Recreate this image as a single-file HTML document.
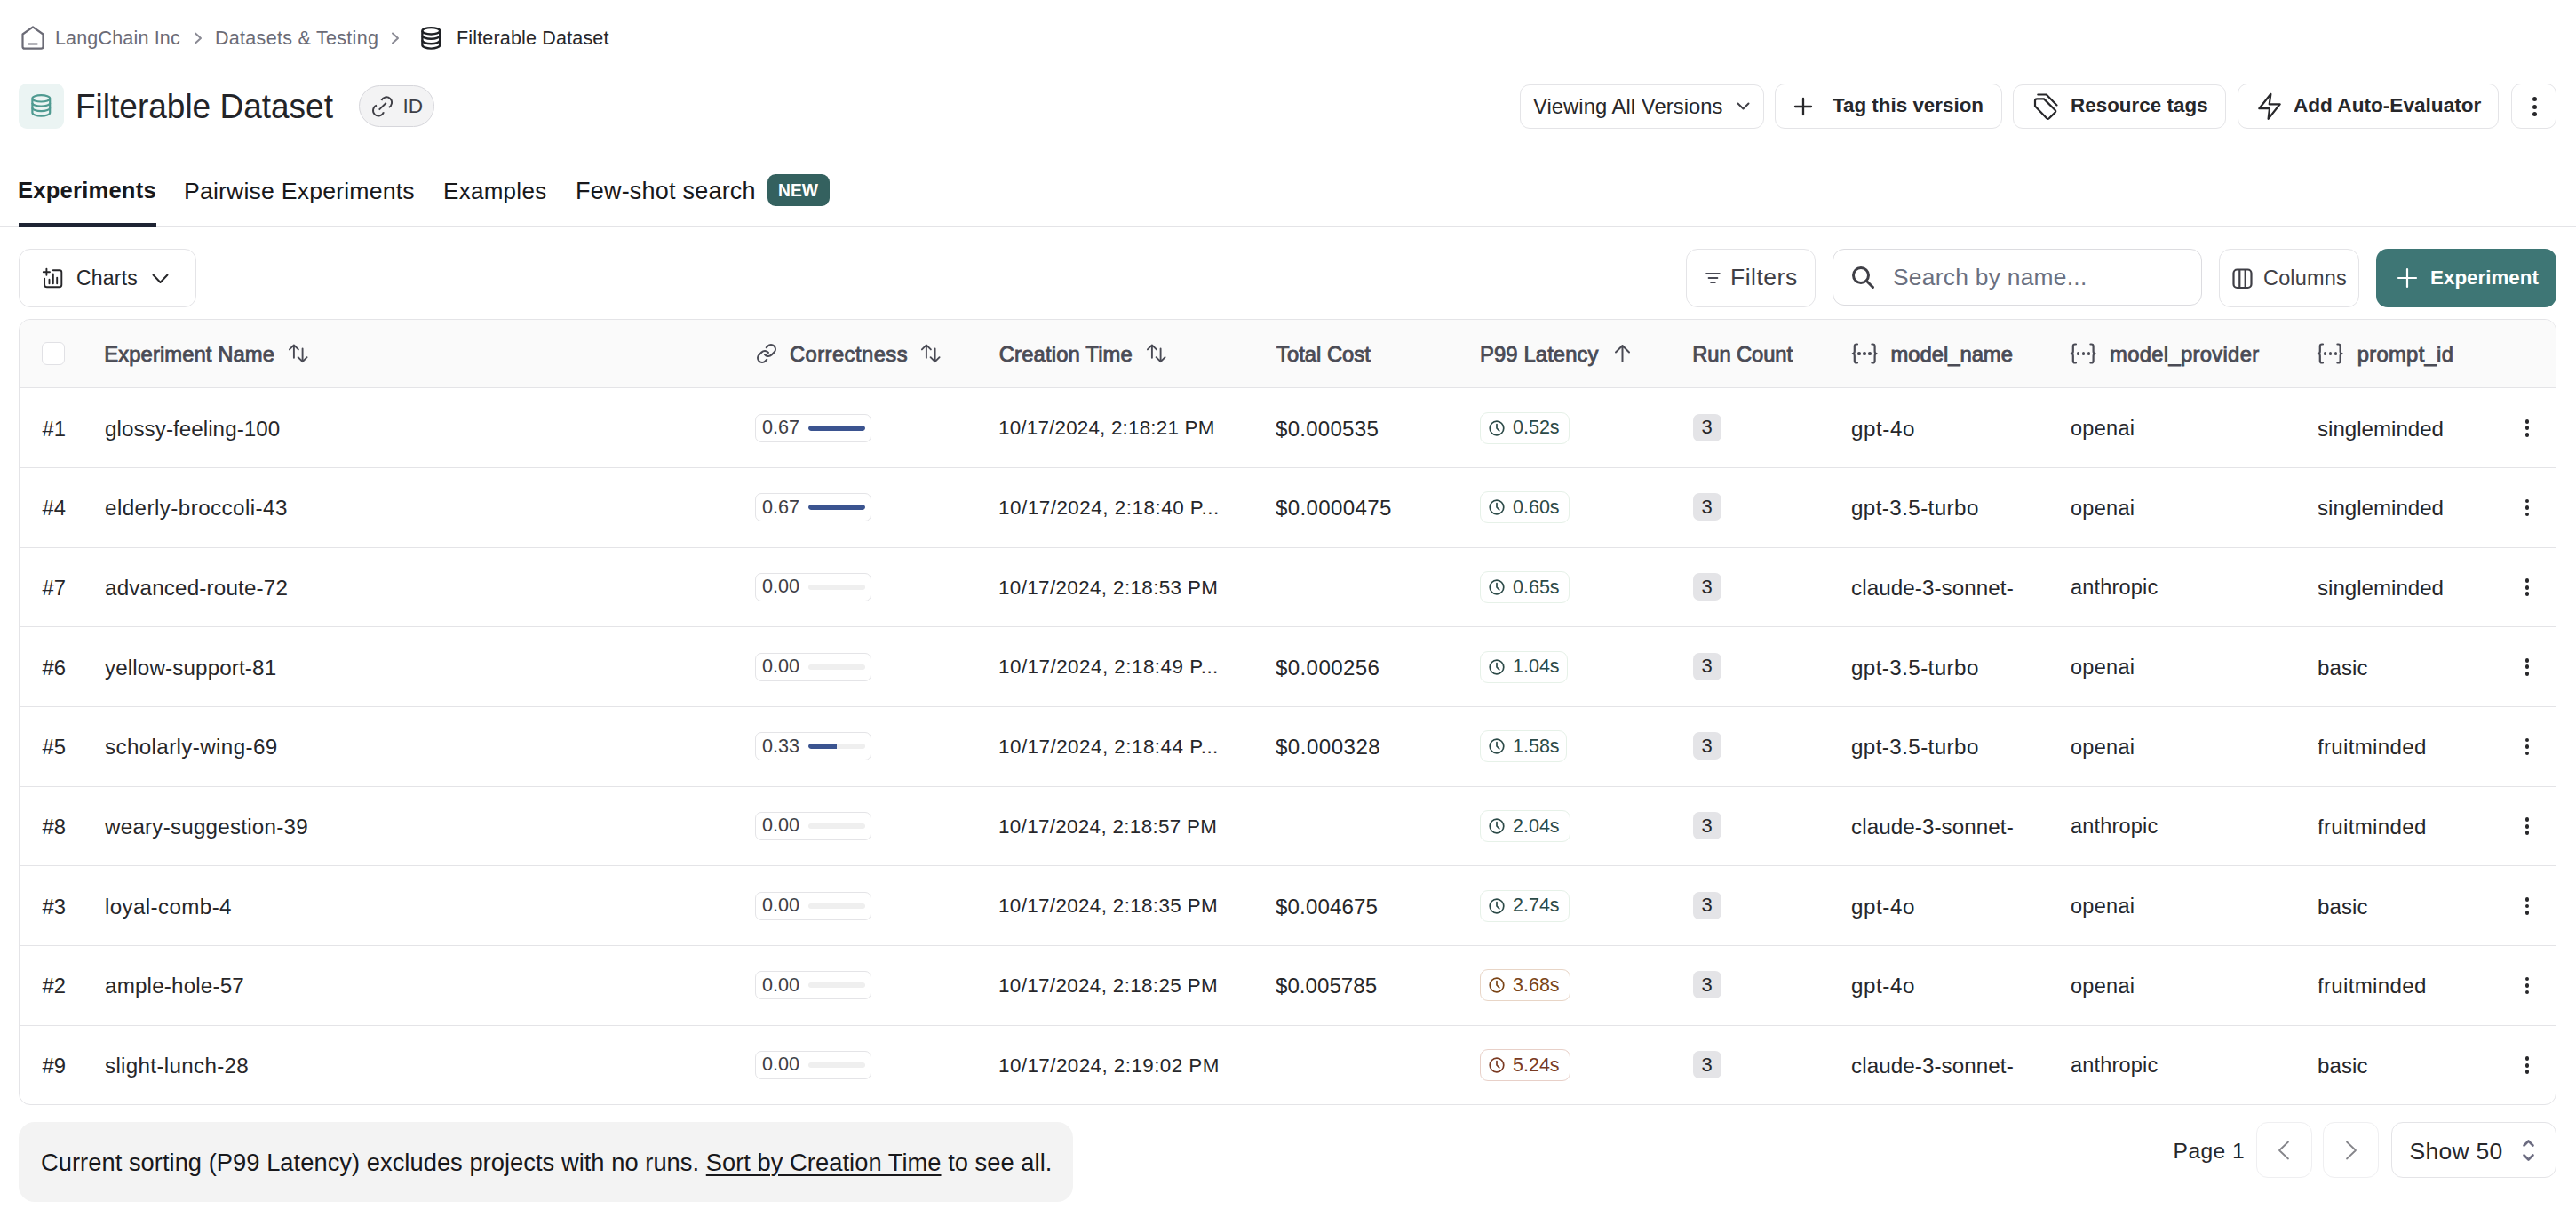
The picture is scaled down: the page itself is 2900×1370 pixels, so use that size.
<!DOCTYPE html>
<html><head><meta charset="utf-8">
<style>
*{box-sizing:border-box;margin:0;padding:0}
html,body{width:2900px;height:1370px;overflow:hidden;background:#fff}
body{position:relative;font-family:"Liberation Sans",sans-serif;color:#18181b}
.a{position:absolute}
.t{position:absolute;line-height:1;white-space:nowrap}
svg{position:absolute;overflow:visible}
.btn{position:absolute;border:1.5px solid #e4e4e7;border-radius:11px;background:#fff}
</style></head><body>

<!-- breadcrumb -->
<svg style="left:24px;top:29px" width="26" height="27" viewBox="0 0 26 27" fill="none" stroke="#6b6b76" stroke-width="2.2" stroke-linejoin="round" stroke-linecap="round">
  <path d="M1.5 9.5 L13 1.3 L24.5 9.5 V23.5 Q24.5 25.7 22.3 25.7 H3.7 Q1.5 25.7 1.5 23.5 Z"/>
  <path d="M8.3 20.5 H17.7"/>
</svg>
<div class="t" style="left:62.00px;top:32.90px;font-size:21.5px;color:#6b6b76;letter-spacing:0.167px">LangChain Inc</div>
<svg style="left:440px;top:36px" width="10" height="14" viewBox="0 0 10 14" fill="none" stroke="#8a8a94" stroke-width="2" stroke-linecap="round" stroke-linejoin="round"><path d="M2 1.5 L8 7 L2 12.5"/></svg>
<div class="t" style="left:242.00px;top:32.90px;font-size:21.5px;color:#6b6b76;letter-spacing:0.296px">Datasets &amp; Testing</div>
<svg style="left:218px;top:36px" width="10" height="14" viewBox="0 0 10 14" fill="none" stroke="#8a8a94" stroke-width="2" stroke-linecap="round" stroke-linejoin="round"><path d="M2 1.5 L8 7 L2 12.5"/></svg>
<svg style="left:474px;top:30px" width="23" height="26" viewBox="0 0 23 26" fill="none" stroke="#1f2125" stroke-width="2.4">
  <ellipse cx="11.3" cy="4.8" rx="9.9" ry="3.7"/>
  <path d="M1.4 4.8 V20.7 C1.4 22.9 5.8 24.6 11.3 24.6 C16.8 24.6 21.2 22.9 21.2 20.7 V4.8"/>
  <path d="M1.4 9.9 C1.4 12 5.8 13.7 11.3 13.7 C16.8 13.7 21.2 12 21.2 9.9"/>
  <path d="M1.4 15.3 C1.4 17.5 5.8 19.2 11.3 19.2 C16.8 19.2 21.2 17.5 21.2 15.3"/>
</svg>
<div class="t" style="left:514.00px;top:32.90px;font-size:21.5px;color:#27272a;letter-spacing:0.173px">Filterable Dataset</div>

<!-- title -->
<div class="a" style="left:21px;top:94px;width:51px;height:51px;border-radius:9px;background:#ebf4f3"></div>
<svg style="left:35px;top:106px" width="23" height="26" viewBox="0 0 23 26" fill="none" stroke="#4f9a91" stroke-width="2.2">
  <ellipse cx="11.3" cy="4.8" rx="9.9" ry="3.7"/>
  <path d="M1.4 4.8 V20.7 C1.4 22.9 5.8 24.6 11.3 24.6 C16.8 24.6 21.2 22.9 21.2 20.7 V4.8"/>
  <path d="M1.4 9.9 C1.4 12 5.8 13.7 11.3 13.7 C16.8 13.7 21.2 12 21.2 9.9"/>
  <path d="M1.4 15.3 C1.4 17.5 5.8 19.2 11.3 19.2 C16.8 19.2 21.2 17.5 21.2 15.3"/>
</svg>
<div class="t" style="left:85px;top:101.6px;font-size:37px;color:#232428;transform:scaleY(1.06);transform-origin:0 32px">Filterable Dataset</div>
<div class="a" style="left:404px;top:96px;width:85px;height:47px;border-radius:24px;background:#f3f3f4;border:1.5px solid #d6d6db"></div>
<svg style="left:418px;top:106px" width="24" height="24" viewBox="0 0 24 24" fill="none" stroke="#3f3f46" stroke-width="1.9" stroke-linecap="butt"><path d="M11.4 7 A6.1 6.1 0 1 1 19.7 14.9"/><path d="M6 12.7 A6.1 6.1 0 1 0 13.9 20.3"/><path d="M8.7 17.6 L16.8 9.7"/></svg>
<div class="t" style="left:453.5px;top:108.8px;font-size:22.6px;color:#3f3f46">ID</div>


<!-- top right buttons -->
<div class="btn" style="left:1711px;top:95px;width:275px;height:50px"></div>
<div class="t" style="left:1726.00px;top:108px;font-size:23.8px;color:#27272a;letter-spacing:0.049px">Viewing All Versions</div>
<svg style="left:1955px;top:115px" width="15" height="9" viewBox="0 0 15 9" fill="none" stroke="#3f3f46" stroke-width="2" stroke-linecap="round" stroke-linejoin="round"><path d="M1.5 1.5 L7.5 7.5 L13.5 1.5"/></svg>

<div class="btn" style="left:1998px;top:94px;width:256px;height:51px"></div>
<svg style="left:2020px;top:110px" width="20" height="20" viewBox="0 0 20 20" fill="none" stroke="#27272a" stroke-width="2.3" stroke-linecap="round"><path d="M10 1 V19 M1 10 H19"/></svg>
<div class="t" style="left:2063.00px;top:108px;font-size:22.4px;font-weight:700;color:#27272a;letter-spacing:0.000px">Tag this version</div>

<div class="btn" style="left:2266px;top:95px;width:240px;height:50px"></div>
<svg style="left:2286px;top:102px" width="34" height="36" viewBox="0 0 34 36" fill="none" stroke="#27272a" stroke-width="2.2" stroke-linejoin="round" stroke-linecap="round">
  <path d="M5 17.5 V11.6 Q5 9.4 7.2 9.4 H15 L27.6 22 Q28.8 23.3 27.6 24.6 L20.8 31.3 Q19.5 32.5 18.2 31.3 Z"/>
  <path d="M8.3 4.5 H17.8 L29.5 16.4"/>
</svg>
<div class="t" style="left:2331.00px;top:108px;font-size:22.3px;font-weight:700;color:#27272a;letter-spacing:0.085px">Resource tags</div>

<div class="btn" style="left:2519px;top:94px;width:294px;height:51px"></div>
<svg style="left:2538px;top:102px" width="34" height="36" viewBox="0 0 34 36" fill="none" stroke="#27272a" stroke-width="2.2" stroke-linejoin="round" stroke-linecap="round"><path d="M18.4 3.8 L5.3 20.2 H17 L15.6 31.9 L28.7 15.3 H16.7 Z"/></svg>
<div class="t" style="left:2582.00px;top:108px;font-size:22.6px;font-weight:700;color:#27272a;letter-spacing:0.002px">Add Auto-Evaluator</div>

<div class="btn" style="left:2827px;top:94px;width:51px;height:51px"></div>
<div class="a" style="left:2850.5px;top:109px;width:5px;height:5px;border-radius:50%;background:#27272a"></div>
<div class="a" style="left:2850.5px;top:117.5px;width:5px;height:5px;border-radius:50%;background:#27272a"></div>
<div class="a" style="left:2850.5px;top:126px;width:5px;height:5px;border-radius:50%;background:#27272a"></div>

<!-- tabs -->
<div class="t" style="left:20.00px;top:202.00px;font-size:25.6px;font-weight:700;color:#18181b;letter-spacing:0.200px">Experiments</div>
<div class="t" style="left:207.00px;top:201.60px;font-size:26.7px;color:#18181b;letter-spacing:0.158px">Pairwise Experiments</div>
<div class="t" style="left:499.00px;top:201.60px;font-size:26px;color:#18181b;letter-spacing:0.286px">Examples</div>
<div class="t" style="left:648.00px;top:201.60px;font-size:27px;color:#18181b;letter-spacing:0.215px">Few-shot search</div>
<div class="a" style="left:864px;top:196px;width:70px;height:36px;border-radius:9px;background:#34615f"></div>
<div class="t" style="left:876px;top:204.5px;font-size:19.3px;font-weight:700;color:#fff">NEW</div>
<div class="a" style="left:0;top:254px;width:2900px;height:1px;background:#e4e4e7"></div>
<div class="a" style="left:21px;top:251px;width:155px;height:3.5px;background:#1e2433"></div>

<!-- toolbar -->
<div class="btn" style="left:21px;top:280px;width:200px;height:66px;border-radius:13px"></div>
<svg style="left:40px;top:295px" width="40" height="35" viewBox="0 0 40 35" fill="none" stroke="#27272a" stroke-width="1.9" stroke-linecap="round" stroke-linejoin="round">
  <path d="M12.4 7.6 V14.8 M8.8 11.2 H16"/>
  <path d="M19.8 9.2 H27 Q29.3 9.2 29.3 11.5 V25.8 Q29.3 28.3 26.8 28.3 H13 Q10.1 28.3 10.1 25.4 V18.6"/>
  <path d="M15.5 19.8 V24.2 M19.8 13.4 V24.2 M24.2 17.6 V24.2"/>
</svg>
<div class="t" style="left:86.00px;top:301.5px;font-size:23px;color:#27272a;letter-spacing:0.200px">Charts</div>
<svg style="left:171px;top:308px" width="19" height="12" viewBox="0 0 19 12" fill="none" stroke="#27272a" stroke-width="2" stroke-linecap="round" stroke-linejoin="round"><path d="M1.5 1.5 L9.5 10 L17.5 1.5"/></svg>

<div class="btn" style="left:1898px;top:280px;width:146px;height:66px;border-radius:13px"></div>
<svg style="left:1910px;top:295px" width="40" height="35" viewBox="0 0 40 35" fill="none" stroke="#4a4b55" stroke-width="1.9" stroke-linecap="round"><path d="M11.1 12.9 H25.8 M13.6 18 H23.4 M16.1 23.1 H20.8"/></svg>
<div class="t" style="left:1948.00px;top:299px;font-size:26.5px;color:#3f3f46;letter-spacing:0.501px">Filters</div>

<div class="btn" style="left:2063px;top:280px;width:416px;height:64px;border-radius:13px;border-color:#dcdce0"></div>
<svg style="left:2084px;top:299px" width="27" height="27" viewBox="0 0 27 27" fill="none" stroke="#3f3f46" stroke-width="3" stroke-linecap="round"><circle cx="11" cy="11" r="8.5"/><path d="M17.5 17.5 L24.5 24.5"/></svg>
<div class="t" style="left:2131.00px;top:299px;font-size:26.4px;color:#6b7080;letter-spacing:0.254px">Search by name...</div>

<div class="btn" style="left:2498px;top:280px;width:158px;height:66px;border-radius:13px"></div>
<svg style="left:2513px;top:302px" width="24" height="24" viewBox="0 0 24 24" fill="none" stroke="#3f3f46" stroke-width="2.2" stroke-linejoin="round"><rect x="1.5" y="1.5" width="20" height="20.5" rx="4"/><path d="M8.3 1.5 V22 M14.7 1.5 V22"/></svg>
<div class="t" style="left:2548.00px;top:301.5px;font-size:23.5px;color:#3f3f46;letter-spacing:0.167px">Columns</div>

<div class="a" style="left:2675px;top:280px;width:203px;height:66px;border-radius:13px;background:#3e7675"></div>
<svg style="left:2699px;top:302px" width="22" height="22" viewBox="0 0 22 22" fill="none" stroke="#fff" stroke-width="2.2" stroke-linecap="round"><path d="M11 1 V21 M1 11 H21"/></svg>
<div class="t" style="left:2736px;top:301.8px;font-size:22.4px;font-weight:700;color:#fff">Experiment</div>

<!-- TABLE START -->
<div class="a" style="left:21px;top:359px;width:2857px;height:885px;border:1px solid #e4e4e7;border-radius:13px;overflow:hidden;background:#fff">
<div class="a" style="left:0;top:0;width:2857px;height:77px;background:#fafafa;border-bottom:1px solid #e4e4e7"></div>
<div class="a" style="left:0;top:165.97px;width:2857px;height:1px;background:#e4e4e7"></div>
<div class="a" style="left:0;top:255.64px;width:2857px;height:1px;background:#e4e4e7"></div>
<div class="a" style="left:0;top:345.31px;width:2857px;height:1px;background:#e4e4e7"></div>
<div class="a" style="left:0;top:434.98px;width:2857px;height:1px;background:#e4e4e7"></div>
<div class="a" style="left:0;top:524.65px;width:2857px;height:1px;background:#e4e4e7"></div>
<div class="a" style="left:0;top:614.32px;width:2857px;height:1px;background:#e4e4e7"></div>
<div class="a" style="left:0;top:703.99px;width:2857px;height:1px;background:#e4e4e7"></div>
<div class="a" style="left:0;top:793.66px;width:2857px;height:1px;background:#e4e4e7"></div>
</div>
<div class="a" style="left:47px;top:385px;width:26px;height:26px;border:1px solid #e1e1e5;border-radius:6px;background:#fff"></div>
<div class="t" style="left:117.3px;top:386.5px;font-size:23.8px;color:#4a4b55;-webkit-text-stroke:0.85px #4a4b55;letter-spacing:0.086px">Experiment Name</div>
<svg style="left:325px;top:387px" width="22" height="21" viewBox="0 0 22 21" fill="none" stroke="#4a4b55" stroke-width="1.9" stroke-linecap="round" stroke-linejoin="round"><path d="M5.9 15.7 V1.6 M0.9 6.4 L5.9 1.4 L10.9 6.4 M15.6 5.4 V19.9 M10.6 15.2 L15.6 20.2 L20.6 15.2"/></svg>
<svg style="left:851px;top:386px" width="24" height="24" viewBox="0 0 24 24" fill="none" stroke="#4a4b55" stroke-width="2.1" stroke-linecap="round" stroke-linejoin="round"><path d="M10 13a5 5 0 0 0 7.54.54l3-3a5 5 0 0 0-7.07-7.07l-1.72 1.71"/><path d="M14 11a5 5 0 0 0-7.54-.54l-3 3a5 5 0 0 0 7.07 7.07l1.71-1.71"/></svg>
<div class="t" style="left:888.9px;top:386.5px;font-size:23.8px;color:#4a4b55;-webkit-text-stroke:0.85px #4a4b55;letter-spacing:0.440px">Correctness</div>
<svg style="left:1037px;top:387px" width="22" height="21" viewBox="0 0 22 21" fill="none" stroke="#4a4b55" stroke-width="1.9" stroke-linecap="round" stroke-linejoin="round"><path d="M5.9 15.7 V1.6 M0.9 6.4 L5.9 1.4 L10.9 6.4 M15.6 5.4 V19.9 M10.6 15.2 L15.6 20.2 L20.6 15.2"/></svg>
<div class="t" style="left:1124.7px;top:386.5px;font-size:23.8px;color:#4a4b55;-webkit-text-stroke:0.85px #4a4b55;letter-spacing:0.167px">Creation Time</div>
<svg style="left:1291px;top:387px" width="22" height="21" viewBox="0 0 22 21" fill="none" stroke="#4a4b55" stroke-width="1.9" stroke-linecap="round" stroke-linejoin="round"><path d="M5.9 15.7 V1.6 M0.9 6.4 L5.9 1.4 L10.9 6.4 M15.6 5.4 V19.9 M10.6 15.2 L15.6 20.2 L20.6 15.2"/></svg>
<div class="t" style="left:1437.0px;top:386.5px;font-size:23.8px;color:#4a4b55;-webkit-text-stroke:0.85px #4a4b55">Total Cost</div>
<div class="t" style="left:1666.0px;top:386.5px;font-size:23.8px;color:#4a4b55;-webkit-text-stroke:0.85px #4a4b55;letter-spacing:0.120px">P99 Latency</div>
<svg style="left:1817px;top:387px" width="19" height="21" viewBox="0 0 19 21" fill="none" stroke="#4a4b55" stroke-width="2" stroke-linecap="round" stroke-linejoin="round"><path d="M9.5 20 V2 M2 9.5 L9.5 2 L17 9.5"/></svg>
<div class="t" style="left:1905.3px;top:386.5px;font-size:23.8px;color:#4a4b55;-webkit-text-stroke:0.85px #4a4b55;letter-spacing:-0.125px">Run Count</div>
<svg style="left:2084.5px;top:386px" width="29" height="24" viewBox="0 0 29 24" fill="none" stroke="#4a4b55" stroke-width="2.2" stroke-linecap="round" stroke-linejoin="round"><path d="M6 1.5 H5 Q2.8 1.5 2.8 3.8 V9.2 Q2.8 12 0.8 12 Q2.8 12 2.8 14.8 V20.2 Q2.8 22.5 5 22.5 H6"/><path d="M22.4 1.5 H23.4 Q25.6 1.5 25.6 3.8 V9.2 Q25.6 12 27.6 12 Q25.6 12 25.6 14.8 V20.2 Q25.6 22.5 23.4 22.5 H22.4"/></svg><div class="a" style="left:2092.7px;top:410px;width:0"></div><div class="a" style="left:2091.1px;top:395.9px;width:3.7px;height:3.7px;border-radius:50%;background:#4a4b55"></div><div class="a" style="left:2097.1px;top:395.9px;width:3.7px;height:3.7px;border-radius:50%;background:#4a4b55"></div><div class="a" style="left:2103.1px;top:395.9px;width:3.7px;height:3.7px;border-radius:50%;background:#4a4b55"></div>
<div class="t" style="left:2128.5px;top:386.5px;font-size:23.8px;color:#4a4b55;-webkit-text-stroke:0.85px #4a4b55;letter-spacing:-0.022px">model_name</div>
<svg style="left:2331px;top:386px" width="29" height="24" viewBox="0 0 29 24" fill="none" stroke="#4a4b55" stroke-width="2.2" stroke-linecap="round" stroke-linejoin="round"><path d="M6 1.5 H5 Q2.8 1.5 2.8 3.8 V9.2 Q2.8 12 0.8 12 Q2.8 12 2.8 14.8 V20.2 Q2.8 22.5 5 22.5 H6"/><path d="M22.4 1.5 H23.4 Q25.6 1.5 25.6 3.8 V9.2 Q25.6 12 27.6 12 Q25.6 12 25.6 14.8 V20.2 Q25.6 22.5 23.4 22.5 H22.4"/></svg><div class="a" style="left:2339.2px;top:410px;width:0"></div><div class="a" style="left:2337.6px;top:395.9px;width:3.7px;height:3.7px;border-radius:50%;background:#4a4b55"></div><div class="a" style="left:2343.6px;top:395.9px;width:3.7px;height:3.7px;border-radius:50%;background:#4a4b55"></div><div class="a" style="left:2349.6px;top:395.9px;width:3.7px;height:3.7px;border-radius:50%;background:#4a4b55"></div>
<div class="t" style="left:2375.1px;top:386.5px;font-size:23.8px;color:#4a4b55;-webkit-text-stroke:0.85px #4a4b55;letter-spacing:0.308px">model_provider</div>
<svg style="left:2609px;top:386px" width="29" height="24" viewBox="0 0 29 24" fill="none" stroke="#4a4b55" stroke-width="2.2" stroke-linecap="round" stroke-linejoin="round"><path d="M6 1.5 H5 Q2.8 1.5 2.8 3.8 V9.2 Q2.8 12 0.8 12 Q2.8 12 2.8 14.8 V20.2 Q2.8 22.5 5 22.5 H6"/><path d="M22.4 1.5 H23.4 Q25.6 1.5 25.6 3.8 V9.2 Q25.6 12 27.6 12 Q25.6 12 25.6 14.8 V20.2 Q25.6 22.5 23.4 22.5 H22.4"/></svg><div class="a" style="left:2617.2px;top:410px;width:0"></div><div class="a" style="left:2615.6px;top:395.9px;width:3.7px;height:3.7px;border-radius:50%;background:#4a4b55"></div><div class="a" style="left:2621.6px;top:395.9px;width:3.7px;height:3.7px;border-radius:50%;background:#4a4b55"></div><div class="a" style="left:2627.6px;top:395.9px;width:3.7px;height:3.7px;border-radius:50%;background:#4a4b55"></div>
<div class="t" style="left:2653.7px;top:386.5px;font-size:23.8px;color:#4a4b55;-webkit-text-stroke:0.85px #4a4b55;letter-spacing:0.300px">prompt_id</div>
<div class="t" style="left:47.5px;top:470.7px;font-size:23.8px;color:#27272a">#1</div>
<div class="t" style="left:118.0px;top:470.5px;font-size:24.2px;color:#27272a;letter-spacing:0.053px">glossy-feeling-100</div>
<div class="a" style="left:850px;top:465.5px;width:131px;height:32px;border:1px solid #e4e4e7;border-radius:7px"></div>
<div class="t" style="left:858.0px;top:470.1px;font-size:21.6px;color:#3f3f46">0.67</div>
<div class="a" style="left:910px;top:478.5px;width:64px;height:6px;border-radius:3px;background:#efefef;overflow:hidden"><div style="width:100%;height:100%;background:#3b5490;border-radius:3px 0 0 3px;border-radius:3px"></div></div>
<div class="t" style="left:1124.0px;top:471.4px;font-size:22.4px;color:#27272a;letter-spacing:0.205px">10/17/2024, 2:18:21 PM</div>
<div class="t" style="left:1436.0px;top:470.6px;font-size:24.1px;color:#27272a;letter-spacing:0.237px">$0.000535</div>
<div class="a" style="left:1666px;top:463.5px;height:36px;border:1px solid #e6f1e8;border-radius:9px;background:#fff;width:100.5px;padding:0 0 0 9px;display:flex;align-items:center;white-space:nowrap"><svg style="position:static;display:block;margin-right:9px" width="18" height="18" viewBox="0 0 18 18" fill="none" stroke="#2c4a48" stroke-width="1.7" stroke-linecap="round"><circle cx="9" cy="9" r="7.8"/><path d="M9 4.5 V9 L11.8 11.8"/></svg><span style="font-size:21.5px;line-height:1;color:#2c4a48;position:relative;top:0.6px">0.52s</span></div>
<div class="a" style="left:1906px;top:465.6px;width:32px;height:31px;border-radius:7px;background:#e4e4e7"></div>
<div class="t" style="left:1915.5px;top:470.4px;font-size:22px;color:#27272a">3</div>
<div class="t" style="left:2084.0px;top:470.5px;font-size:24.2px;color:#27272a;letter-spacing:0.560px">gpt-4o</div>
<div class="t" style="left:2331.0px;top:470.9px;font-size:23.5px;color:#27272a;letter-spacing:0.280px">openai</div>
<div class="t" style="left:2609.0px;top:470.6px;font-size:24.1px;color:#27272a">singleminded</div>
<div class="a" style="left:2842.7px;top:471.9px;width:4.8px;height:4.8px;border-radius:50%;background:#27272a"></div>
<div class="a" style="left:2842.7px;top:479.4px;width:4.8px;height:4.8px;border-radius:50%;background:#27272a"></div>
<div class="a" style="left:2842.7px;top:486.9px;width:4.8px;height:4.8px;border-radius:50%;background:#27272a"></div>
<div class="t" style="left:47.5px;top:560.4px;font-size:23.8px;color:#27272a">#4</div>
<div class="t" style="left:118.0px;top:560.2px;font-size:24.2px;color:#27272a;letter-spacing:0.433px">elderly-broccoli-43</div>
<div class="a" style="left:850px;top:555.2px;width:131px;height:32px;border:1px solid #e4e4e7;border-radius:7px"></div>
<div class="t" style="left:858.0px;top:559.8px;font-size:21.6px;color:#3f3f46">0.67</div>
<div class="a" style="left:910px;top:568.2px;width:64px;height:6px;border-radius:3px;background:#efefef;overflow:hidden"><div style="width:100%;height:100%;background:#3b5490;border-radius:3px 0 0 3px;border-radius:3px"></div></div>
<div class="t" style="left:1124.0px;top:561.1px;font-size:22.4px;color:#27272a;letter-spacing:0.522px">10/17/2024, 2:18:40 P...</div>
<div class="t" style="left:1436.0px;top:560.2px;font-size:24.1px;color:#27272a;letter-spacing:0.333px">$0.0000475</div>
<div class="a" style="left:1666px;top:553.2px;height:36px;border:1px solid #e6f1e8;border-radius:9px;background:#fff;width:101px;padding:0 0 0 9px;display:flex;align-items:center;white-space:nowrap"><svg style="position:static;display:block;margin-right:9px" width="18" height="18" viewBox="0 0 18 18" fill="none" stroke="#2c4a48" stroke-width="1.7" stroke-linecap="round"><circle cx="9" cy="9" r="7.8"/><path d="M9 4.5 V9 L11.8 11.8"/></svg><span style="font-size:21.5px;line-height:1;color:#2c4a48;position:relative;top:0.6px">0.60s</span></div>
<div class="a" style="left:1906px;top:555.3px;width:32px;height:31px;border-radius:7px;background:#e4e4e7"></div>
<div class="t" style="left:1915.5px;top:560.1px;font-size:22px;color:#27272a">3</div>
<div class="t" style="left:2084.0px;top:560.2px;font-size:24.2px;color:#27272a;letter-spacing:0.408px">gpt-3.5-turbo</div>
<div class="t" style="left:2331.0px;top:560.5px;font-size:23.5px;color:#27272a;letter-spacing:0.280px">openai</div>
<div class="t" style="left:2609.0px;top:560.2px;font-size:24.1px;color:#27272a">singleminded</div>
<div class="a" style="left:2842.7px;top:561.6px;width:4.8px;height:4.8px;border-radius:50%;background:#27272a"></div>
<div class="a" style="left:2842.7px;top:569.1px;width:4.8px;height:4.8px;border-radius:50%;background:#27272a"></div>
<div class="a" style="left:2842.7px;top:576.6px;width:4.8px;height:4.8px;border-radius:50%;background:#27272a"></div>
<div class="t" style="left:47.5px;top:650.0px;font-size:23.8px;color:#27272a">#7</div>
<div class="t" style="left:118.0px;top:649.9px;font-size:24.2px;color:#27272a;letter-spacing:0.175px">advanced-route-72</div>
<div class="a" style="left:850px;top:644.9px;width:131px;height:32px;border:1px solid #e4e4e7;border-radius:7px"></div>
<div class="t" style="left:858.0px;top:649.4px;font-size:21.6px;color:#3f3f46">0.00</div>
<div class="a" style="left:910px;top:657.9px;width:64px;height:6px;border-radius:3px;background:#efefef;overflow:hidden"><div style="width:0%;height:100%;background:#3b5490;border-radius:3px 0 0 3px"></div></div>
<div class="t" style="left:1124.0px;top:650.7px;font-size:22.4px;color:#27272a;letter-spacing:0.381px">10/17/2024, 2:18:53 PM</div>
<div class="a" style="left:1666px;top:642.9px;height:36px;border:1px solid #e6f1e8;border-radius:9px;background:#fff;width:100.5px;padding:0 0 0 9px;display:flex;align-items:center;white-space:nowrap"><svg style="position:static;display:block;margin-right:9px" width="18" height="18" viewBox="0 0 18 18" fill="none" stroke="#2c4a48" stroke-width="1.7" stroke-linecap="round"><circle cx="9" cy="9" r="7.8"/><path d="M9 4.5 V9 L11.8 11.8"/></svg><span style="font-size:21.5px;line-height:1;color:#2c4a48;position:relative;top:0.6px">0.65s</span></div>
<div class="a" style="left:1906px;top:645.0px;width:32px;height:31px;border-radius:7px;background:#e4e4e7"></div>
<div class="t" style="left:1915.5px;top:649.7px;font-size:22px;color:#27272a">3</div>
<div class="t" style="left:2084.0px;top:649.9px;font-size:24.2px;color:#27272a;letter-spacing:0.080px">claude-3-sonnet-</div>
<div class="t" style="left:2331.0px;top:650.2px;font-size:23.5px;color:#27272a;letter-spacing:0.188px">anthropic</div>
<div class="t" style="left:2609.0px;top:649.9px;font-size:24.1px;color:#27272a">singleminded</div>
<div class="a" style="left:2842.7px;top:651.3px;width:4.8px;height:4.8px;border-radius:50%;background:#27272a"></div>
<div class="a" style="left:2842.7px;top:658.8px;width:4.8px;height:4.8px;border-radius:50%;background:#27272a"></div>
<div class="a" style="left:2842.7px;top:666.3px;width:4.8px;height:4.8px;border-radius:50%;background:#27272a"></div>
<div class="t" style="left:47.5px;top:739.7px;font-size:23.8px;color:#27272a">#6</div>
<div class="t" style="left:118.0px;top:739.5px;font-size:24.2px;color:#27272a;letter-spacing:0.137px">yellow-support-81</div>
<div class="a" style="left:850px;top:734.5px;width:131px;height:32px;border:1px solid #e4e4e7;border-radius:7px"></div>
<div class="t" style="left:858.0px;top:739.1px;font-size:21.6px;color:#3f3f46">0.00</div>
<div class="a" style="left:910px;top:747.5px;width:64px;height:6px;border-radius:3px;background:#efefef;overflow:hidden"><div style="width:0%;height:100%;background:#3b5490;border-radius:3px 0 0 3px"></div></div>
<div class="t" style="left:1124.0px;top:740.4px;font-size:22.4px;color:#27272a;letter-spacing:0.487px">10/17/2024, 2:18:49 P...</div>
<div class="t" style="left:1436.0px;top:739.6px;font-size:24.1px;color:#27272a;letter-spacing:0.375px">$0.000256</div>
<div class="a" style="left:1666px;top:732.5px;height:36px;border:1px solid #e6f1e8;border-radius:9px;background:#fff;width:98.5px;padding:0 0 0 9px;display:flex;align-items:center;white-space:nowrap"><svg style="position:static;display:block;margin-right:9px" width="18" height="18" viewBox="0 0 18 18" fill="none" stroke="#2c4a48" stroke-width="1.7" stroke-linecap="round"><circle cx="9" cy="9" r="7.8"/><path d="M9 4.5 V9 L11.8 11.8"/></svg><span style="font-size:21.5px;line-height:1;color:#2c4a48;position:relative;top:0.6px">1.04s</span></div>
<div class="a" style="left:1906px;top:734.6px;width:32px;height:31px;border-radius:7px;background:#e4e4e7"></div>
<div class="t" style="left:1915.5px;top:739.4px;font-size:22px;color:#27272a">3</div>
<div class="t" style="left:2084.0px;top:739.5px;font-size:24.2px;color:#27272a;letter-spacing:0.408px">gpt-3.5-turbo</div>
<div class="t" style="left:2331.0px;top:739.9px;font-size:23.5px;color:#27272a;letter-spacing:0.280px">openai</div>
<div class="t" style="left:2609.0px;top:739.6px;font-size:24.1px;color:#27272a;letter-spacing:0.050px">basic</div>
<div class="a" style="left:2842.7px;top:740.9px;width:4.8px;height:4.8px;border-radius:50%;background:#27272a"></div>
<div class="a" style="left:2842.7px;top:748.4px;width:4.8px;height:4.8px;border-radius:50%;background:#27272a"></div>
<div class="a" style="left:2842.7px;top:755.9px;width:4.8px;height:4.8px;border-radius:50%;background:#27272a"></div>
<div class="t" style="left:47.5px;top:829.4px;font-size:23.8px;color:#27272a">#5</div>
<div class="t" style="left:118.0px;top:829.2px;font-size:24.2px;color:#27272a;letter-spacing:0.375px">scholarly-wing-69</div>
<div class="a" style="left:850px;top:824.2px;width:131px;height:32px;border:1px solid #e4e4e7;border-radius:7px"></div>
<div class="t" style="left:858.0px;top:828.8px;font-size:21.6px;color:#3f3f46">0.33</div>
<div class="a" style="left:910px;top:837.2px;width:64px;height:6px;border-radius:3px;background:#efefef;overflow:hidden"><div style="width:50%;height:100%;background:#3b5490;border-radius:3px 0 0 3px"></div></div>
<div class="t" style="left:1124.0px;top:830.1px;font-size:22.4px;color:#27272a;letter-spacing:0.487px">10/17/2024, 2:18:44 P...</div>
<div class="t" style="left:1436.0px;top:829.2px;font-size:24.1px;color:#27272a;letter-spacing:0.475px">$0.000328</div>
<div class="a" style="left:1666px;top:822.2px;height:36px;border:1px solid #e6f1e8;border-radius:9px;background:#fff;width:97.5px;padding:0 0 0 9px;display:flex;align-items:center;white-space:nowrap"><svg style="position:static;display:block;margin-right:9px" width="18" height="18" viewBox="0 0 18 18" fill="none" stroke="#2c4a48" stroke-width="1.7" stroke-linecap="round"><circle cx="9" cy="9" r="7.8"/><path d="M9 4.5 V9 L11.8 11.8"/></svg><span style="font-size:21.5px;line-height:1;color:#2c4a48;position:relative;top:0.6px">1.58s</span></div>
<div class="a" style="left:1906px;top:824.3px;width:32px;height:31px;border-radius:7px;background:#e4e4e7"></div>
<div class="t" style="left:1915.5px;top:829.1px;font-size:22px;color:#27272a">3</div>
<div class="t" style="left:2084.0px;top:829.2px;font-size:24.2px;color:#27272a;letter-spacing:0.408px">gpt-3.5-turbo</div>
<div class="t" style="left:2331.0px;top:829.5px;font-size:23.5px;color:#27272a;letter-spacing:0.280px">openai</div>
<div class="t" style="left:2609.0px;top:829.2px;font-size:24.1px;color:#27272a;letter-spacing:0.310px">fruitminded</div>
<div class="a" style="left:2842.7px;top:830.6px;width:4.8px;height:4.8px;border-radius:50%;background:#27272a"></div>
<div class="a" style="left:2842.7px;top:838.1px;width:4.8px;height:4.8px;border-radius:50%;background:#27272a"></div>
<div class="a" style="left:2842.7px;top:845.6px;width:4.8px;height:4.8px;border-radius:50%;background:#27272a"></div>
<div class="t" style="left:47.5px;top:919.1px;font-size:23.8px;color:#27272a">#8</div>
<div class="t" style="left:118.0px;top:918.9px;font-size:24.2px;color:#27272a;letter-spacing:0.228px">weary-suggestion-39</div>
<div class="a" style="left:850px;top:913.9px;width:131px;height:32px;border:1px solid #e4e4e7;border-radius:7px"></div>
<div class="t" style="left:858.0px;top:918.4px;font-size:21.6px;color:#3f3f46">0.00</div>
<div class="a" style="left:910px;top:926.9px;width:64px;height:6px;border-radius:3px;background:#efefef;overflow:hidden"><div style="width:0%;height:100%;background:#3b5490;border-radius:3px 0 0 3px"></div></div>
<div class="t" style="left:1124.0px;top:919.7px;font-size:22.4px;color:#27272a;letter-spacing:0.333px">10/17/2024, 2:18:57 PM</div>
<div class="a" style="left:1666px;top:911.9px;height:36px;border:1px solid #e6f1e8;border-radius:9px;background:#fff;width:102px;padding:0 0 0 9px;display:flex;align-items:center;white-space:nowrap"><svg style="position:static;display:block;margin-right:9px" width="18" height="18" viewBox="0 0 18 18" fill="none" stroke="#2c4a48" stroke-width="1.7" stroke-linecap="round"><circle cx="9" cy="9" r="7.8"/><path d="M9 4.5 V9 L11.8 11.8"/></svg><span style="font-size:21.5px;line-height:1;color:#2c4a48;position:relative;top:0.6px">2.04s</span></div>
<div class="a" style="left:1906px;top:914.0px;width:32px;height:31px;border-radius:7px;background:#e4e4e7"></div>
<div class="t" style="left:1915.5px;top:918.7px;font-size:22px;color:#27272a">3</div>
<div class="t" style="left:2084.0px;top:918.9px;font-size:24.2px;color:#27272a;letter-spacing:0.080px">claude-3-sonnet-</div>
<div class="t" style="left:2331.0px;top:919.2px;font-size:23.5px;color:#27272a;letter-spacing:0.188px">anthropic</div>
<div class="t" style="left:2609.0px;top:918.9px;font-size:24.1px;color:#27272a;letter-spacing:0.310px">fruitminded</div>
<div class="a" style="left:2842.7px;top:920.3px;width:4.8px;height:4.8px;border-radius:50%;background:#27272a"></div>
<div class="a" style="left:2842.7px;top:927.8px;width:4.8px;height:4.8px;border-radius:50%;background:#27272a"></div>
<div class="a" style="left:2842.7px;top:935.3px;width:4.8px;height:4.8px;border-radius:50%;background:#27272a"></div>
<div class="t" style="left:47.5px;top:1008.7px;font-size:23.8px;color:#27272a">#3</div>
<div class="t" style="left:118.0px;top:1008.5px;font-size:24.2px;color:#27272a;letter-spacing:0.373px">loyal-comb-4</div>
<div class="a" style="left:850px;top:1003.6px;width:131px;height:32px;border:1px solid #e4e4e7;border-radius:7px"></div>
<div class="t" style="left:858.0px;top:1008.1px;font-size:21.6px;color:#3f3f46">0.00</div>
<div class="a" style="left:910px;top:1016.6px;width:64px;height:6px;border-radius:3px;background:#efefef;overflow:hidden"><div style="width:0%;height:100%;background:#3b5490;border-radius:3px 0 0 3px"></div></div>
<div class="t" style="left:1124.0px;top:1009.4px;font-size:22.4px;color:#27272a;letter-spacing:0.362px">10/17/2024, 2:18:35 PM</div>
<div class="t" style="left:1436.0px;top:1008.6px;font-size:24.1px;color:#27272a;letter-spacing:0.138px">$0.004675</div>
<div class="a" style="left:1666px;top:1001.6px;height:36px;border:1px solid #e6f1e8;border-radius:9px;background:#fff;width:100.5px;padding:0 0 0 9px;display:flex;align-items:center;white-space:nowrap"><svg style="position:static;display:block;margin-right:9px" width="18" height="18" viewBox="0 0 18 18" fill="none" stroke="#2c4a48" stroke-width="1.7" stroke-linecap="round"><circle cx="9" cy="9" r="7.8"/><path d="M9 4.5 V9 L11.8 11.8"/></svg><span style="font-size:21.5px;line-height:1;color:#2c4a48;position:relative;top:0.6px">2.74s</span></div>
<div class="a" style="left:1906px;top:1003.7px;width:32px;height:31px;border-radius:7px;background:#e4e4e7"></div>
<div class="t" style="left:1915.5px;top:1008.4px;font-size:22px;color:#27272a">3</div>
<div class="t" style="left:2084.0px;top:1008.5px;font-size:24.2px;color:#27272a;letter-spacing:0.560px">gpt-4o</div>
<div class="t" style="left:2331.0px;top:1008.9px;font-size:23.5px;color:#27272a;letter-spacing:0.280px">openai</div>
<div class="t" style="left:2609.0px;top:1008.6px;font-size:24.1px;color:#27272a;letter-spacing:0.050px">basic</div>
<div class="a" style="left:2842.7px;top:1010.0px;width:4.8px;height:4.8px;border-radius:50%;background:#27272a"></div>
<div class="a" style="left:2842.7px;top:1017.5px;width:4.8px;height:4.8px;border-radius:50%;background:#27272a"></div>
<div class="a" style="left:2842.7px;top:1025.0px;width:4.8px;height:4.8px;border-radius:50%;background:#27272a"></div>
<div class="t" style="left:47.5px;top:1098.4px;font-size:23.8px;color:#27272a">#2</div>
<div class="t" style="left:118.0px;top:1098.2px;font-size:24.2px;color:#27272a;letter-spacing:0.183px">ample-hole-57</div>
<div class="a" style="left:850px;top:1093.2px;width:131px;height:32px;border:1px solid #e4e4e7;border-radius:7px"></div>
<div class="t" style="left:858.0px;top:1097.8px;font-size:21.6px;color:#3f3f46">0.00</div>
<div class="a" style="left:910px;top:1106.2px;width:64px;height:6px;border-radius:3px;background:#efefef;overflow:hidden"><div style="width:0%;height:100%;background:#3b5490;border-radius:3px 0 0 3px"></div></div>
<div class="t" style="left:1124.0px;top:1099.1px;font-size:22.4px;color:#27272a;letter-spacing:0.362px">10/17/2024, 2:18:25 PM</div>
<div class="t" style="left:1436.0px;top:1098.3px;font-size:24.1px;color:#27272a;letter-spacing:0.025px">$0.005785</div>
<div class="a" style="left:1666px;top:1091.2px;height:36px;border:1px solid #e8d5c6;border-radius:9px;background:#fff;width:101.5px;padding:0 0 0 9px;display:flex;align-items:center;white-space:nowrap"><svg style="position:static;display:block;margin-right:9px" width="18" height="18" viewBox="0 0 18 18" fill="none" stroke="#7a4416" stroke-width="1.7" stroke-linecap="round"><circle cx="9" cy="9" r="7.8"/><path d="M9 4.5 V9 L11.8 11.8"/></svg><span style="font-size:21.5px;line-height:1;color:#7a4416;position:relative;top:0.6px">3.68s</span></div>
<div class="a" style="left:1906px;top:1093.3px;width:32px;height:31px;border-radius:7px;background:#e4e4e7"></div>
<div class="t" style="left:1915.5px;top:1098.1px;font-size:22px;color:#27272a">3</div>
<div class="t" style="left:2084.0px;top:1098.2px;font-size:24.2px;color:#27272a;letter-spacing:0.560px">gpt-4o</div>
<div class="t" style="left:2331.0px;top:1098.5px;font-size:23.5px;color:#27272a;letter-spacing:0.280px">openai</div>
<div class="t" style="left:2609.0px;top:1098.3px;font-size:24.1px;color:#27272a;letter-spacing:0.310px">fruitminded</div>
<div class="a" style="left:2842.7px;top:1099.6px;width:4.8px;height:4.8px;border-radius:50%;background:#27272a"></div>
<div class="a" style="left:2842.7px;top:1107.1px;width:4.8px;height:4.8px;border-radius:50%;background:#27272a"></div>
<div class="a" style="left:2842.7px;top:1114.6px;width:4.8px;height:4.8px;border-radius:50%;background:#27272a"></div>
<div class="t" style="left:47.5px;top:1188.1px;font-size:23.8px;color:#27272a">#9</div>
<div class="t" style="left:118.0px;top:1187.9px;font-size:24.2px;color:#27272a;letter-spacing:0.321px">slight-lunch-28</div>
<div class="a" style="left:850px;top:1182.9px;width:131px;height:32px;border:1px solid #e4e4e7;border-radius:7px"></div>
<div class="t" style="left:858.0px;top:1187.4px;font-size:21.6px;color:#3f3f46">0.00</div>
<div class="a" style="left:910px;top:1195.9px;width:64px;height:6px;border-radius:3px;background:#efefef;overflow:hidden"><div style="width:0%;height:100%;background:#3b5490;border-radius:3px 0 0 3px"></div></div>
<div class="t" style="left:1124.0px;top:1188.8px;font-size:22.4px;color:#27272a;letter-spacing:0.443px">10/17/2024, 2:19:02 PM</div>
<div class="a" style="left:1666px;top:1180.9px;height:36px;border:1px solid #e8d0c8;border-radius:9px;background:#fff;width:101.5px;padding:0 0 0 9px;display:flex;align-items:center;white-space:nowrap"><svg style="position:static;display:block;margin-right:9px" width="18" height="18" viewBox="0 0 18 18" fill="none" stroke="#7a3a22" stroke-width="1.7" stroke-linecap="round"><circle cx="9" cy="9" r="7.8"/><path d="M9 4.5 V9 L11.8 11.8"/></svg><span style="font-size:21.5px;line-height:1;color:#7a3a22;position:relative;top:0.6px">5.24s</span></div>
<div class="a" style="left:1906px;top:1183.0px;width:32px;height:31px;border-radius:7px;background:#e4e4e7"></div>
<div class="t" style="left:1915.5px;top:1187.7px;font-size:22px;color:#27272a">3</div>
<div class="t" style="left:2084.0px;top:1187.9px;font-size:24.2px;color:#27272a;letter-spacing:0.080px">claude-3-sonnet-</div>
<div class="t" style="left:2331.0px;top:1188.2px;font-size:23.5px;color:#27272a;letter-spacing:0.188px">anthropic</div>
<div class="t" style="left:2609.0px;top:1187.9px;font-size:24.1px;color:#27272a;letter-spacing:0.050px">basic</div>
<div class="a" style="left:2842.7px;top:1189.3px;width:4.8px;height:4.8px;border-radius:50%;background:#27272a"></div>
<div class="a" style="left:2842.7px;top:1196.8px;width:4.8px;height:4.8px;border-radius:50%;background:#27272a"></div>
<div class="a" style="left:2842.7px;top:1204.3px;width:4.8px;height:4.8px;border-radius:50%;background:#27272a"></div>
<div class="a" style="left:21px;top:1263px;width:1187px;height:90px;border-radius:18px;background:#f3f3f3"></div>
<div class="t" style="left:46.0px;top:1294.7px;font-size:27.3px;color:#18181b;letter-spacing:0.037px">Current sorting (P99 Latency) excludes projects with no runs. <span style="text-decoration:underline;text-underline-offset:4px;text-decoration-thickness:1.5px">Sort by Creation Time</span> to see all.</div>
<div class="t" style="left:2446.6px;top:1283.8px;font-size:24.6px;color:#27272a;letter-spacing:0.420px">Page 1</div>
<div class="btn" style="left:2539.5px;top:1263px;width:63px;height:63px;border-radius:13px;border-color:#efeff1"></div>
<svg style="left:2564px;top:1284px" width="14" height="22" viewBox="0 0 14 22" fill="none" stroke="#85858a" stroke-width="1.8" stroke-linecap="round" stroke-linejoin="round"><path d="M12 1.5 L2 11 L12 20.5"/></svg>
<div class="btn" style="left:2615px;top:1263px;width:63px;height:63px;border-radius:13px;border-color:#efeff1"></div>
<svg style="left:2640px;top:1284px" width="14" height="22" viewBox="0 0 14 22" fill="none" stroke="#85858a" stroke-width="1.8" stroke-linecap="round" stroke-linejoin="round"><path d="M2 1.5 L12 11 L2 20.5"/></svg>
<div class="btn" style="left:2692px;top:1263px;width:186px;height:63px;border-radius:13px"></div>
<div class="t" style="left:2712.5px;top:1282.7px;font-size:26.5px;color:#27272a;letter-spacing:0.267px">Show 50</div>
<svg style="left:2840px;top:1283px" width="13" height="24" viewBox="0 0 13 24" fill="none" stroke="#6b6b80" stroke-width="2.6" stroke-linecap="round" stroke-linejoin="round"><path d="M1.5 6.5 L6.5 1.5 L11.5 6.5 M1.5 17.5 L6.5 22.5 L11.5 17.5"/></svg>
<!-- TABLE END -->
</body></html>
